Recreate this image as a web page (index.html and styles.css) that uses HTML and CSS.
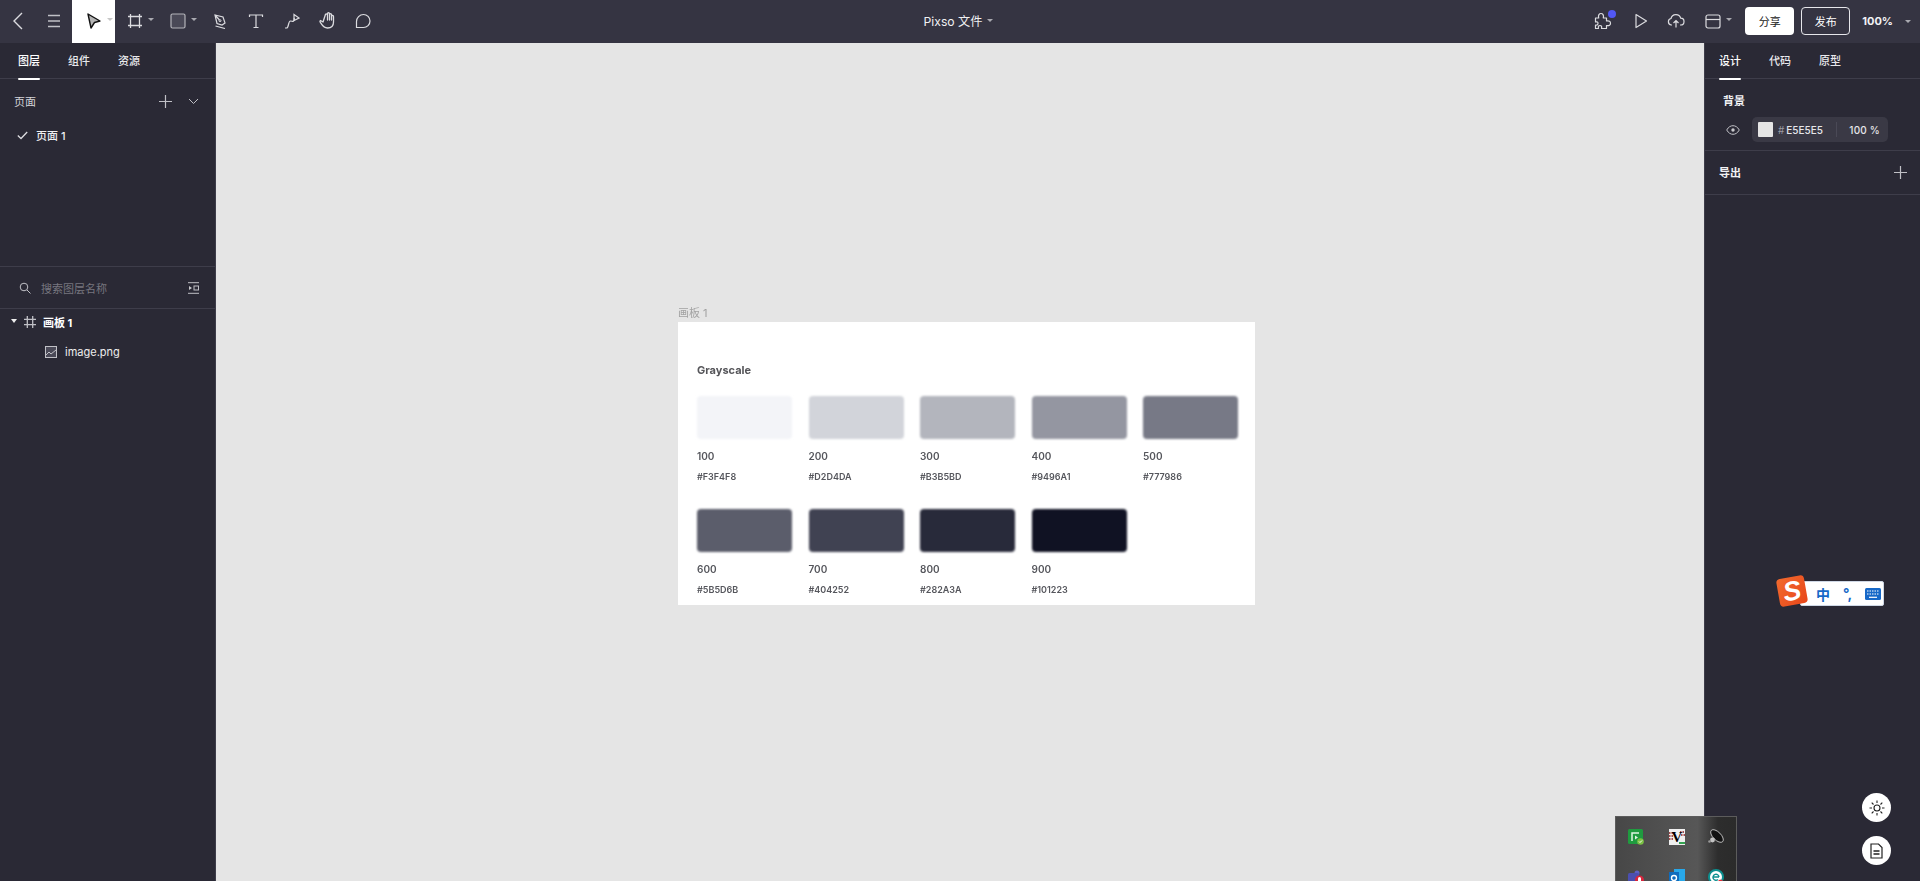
FILE: index.html
```html
<!DOCTYPE html>
<html lang="zh">
<head>
<meta charset="utf-8">
<title>Pixso</title>
<link rel="stylesheet" href="styles.css">
</head>
<body>
<div class="app">
  <header class="topbar">
    <div class="tools">
      <button class="tool w36"><svg width="20" height="20" viewBox="0 0 20 20" class="ic"><path d="M14 2 6 10l8 8" stroke-width="1.4"/></svg></button>
      <button class="tool w36"><svg width="16" height="16" viewBox="0 0 16 16" class="ic dim"><path d="M2 2.500h12M2 8h12M2 13.500h12" stroke-width="1.300"/></svg></button>
      <button class="tool w43 active">
        <svg width="16" height="18" viewBox="0 0 16 18"><path d="M2 2l12 7-5.500 1.500L5 16z" fill="#b5b5b5" stroke="#111" stroke-width="1.400" stroke-linejoin="round"/></svg>
        <span class="caret light"></span>
      </button>
      <button class="tool w43 f1">
        <svg width="16" height="16" viewBox="0 0 16 16" class="ic"><path d="M3.500 1v14M12.500 1v14M1 3.500h14M1 12.500h14" stroke-width="1.300"/></svg>
        <span class="caret"></span>
      </button>
      <button class="tool w43 f1">
        <svg width="16" height="16" viewBox="0 0 16 16" class="ic"><rect x="1" y="1" width="14" height="14" rx="1.500" fill="#4a4957" stroke="#b4b4ba" stroke-width="1.200"/></svg>
        <span class="caret"></span>
      </button>
      <button class="tool w37"><svg width="16" height="16" viewBox="0 0 16 16" class="ic"><path d="M3 2l8 2 2 6-3 2-5-1.500zM3 2l4.500 5M3.500 13l9.500 2.500" stroke-width="1.200"/><circle cx="8" cy="7.700" r="1" stroke-width="1"/></svg></button>
      <button class="tool w36"><svg width="16" height="16" viewBox="0 0 16 16" class="ic"><path d="M1.500 4V2h13v2M8 2v12.500M5.500 14.500h5" stroke-width="1.200"/></svg></button>
      <button class="tool w35"><svg width="16" height="16" viewBox="0 0 16 16" class="ic"><path d="M1 15h1.500C5 15 4 8 6.500 8c2 0 1.500 1 3 0s.5-3 .5-3" stroke-width="1.200"/><path d="M10 1.500 15 5l-5 2.500z" stroke-width="1.200"/></svg></button>
      <button class="tool w36"><svg width="17" height="17" viewBox="0 0 17 17" class="ic"><path d="M4 10 1.500 8.500C.5 9 1 10 1.800 11c1 1.500 2.500 5 6.700 5 4.500 0 6-2.500 6-6V4.500c0-1.500-2-1.500-2 0V8V2.800c0-1.500-2-1.500-2 0V8V1.800c0-1.500-2-1.500-2 0V8V3c0-1.500-2.200-1.500-2.200 0z" stroke-width="1.300" stroke-linejoin="round"/></svg></button>
      <button class="tool w36"><svg width="16" height="16" viewBox="0 0 16 16" class="ic"><path d="M8.500 1.500a6.500 6.500 0 0 1 0 13H1.500V8.500a7 7 0 0 1 7-7z" stroke-width="1.200"/></svg></button>
    </div>
    <div class="doc-title">Pixso 文件<span class="caret"></span></div>
    <div class="actions">
      <span class="act plugin">
        <svg width="18" height="18" viewBox="0 0 18 18" class="ic"><path d="M1.500 6h3.200c-.8-3 .6-4.500 2.300-4.500S10 3 9.300 6h3.200v3c2.700-.6 4 .6 4 2.200s-1.300 3-4 2.300v3H7.500c.6-2.200-.2-3-1.500-3s-2.100.8-1.500 3h-3v-3.500c1.800.3 2.500-.5 2.500-1.700S3.300 9.600 1.500 10z" stroke-width="1.200" stroke-linejoin="round"/></svg>
        <i class="dot"></i>
      </span>
      <span class="act"><svg width="14" height="16" viewBox="0 0 14 16" class="ic"><path d="M2 1.500 12.500 8 2 14.500z" stroke-width="1.200" stroke-linejoin="round"/></svg></span>
      <span class="act"><svg width="18" height="16" viewBox="0 0 18 16" class="ic"><path d="M5 12H4.300A3.300 3.300 0 0 1 4 5.500a5 5 0 0 1 9.700-.3A3.400 3.400 0 0 1 13.500 12H13M9 14.500V7.500M6.500 10 9 7.500l2.500 2.500" stroke-width="1.200"/></svg></span>
      <span class="act layout">
        <svg width="16" height="15" viewBox="0 0 16 15" class="ic"><rect x="1" y="1" width="14" height="13" rx="2" stroke-width="1.200"/><path d="M1 5.500h14" stroke-width="1.200"/></svg>
        <span class="caret"></span>
      </span>
      <button class="btn solid">分享</button>
      <button class="btn outline">发布</button>
      <span class="zoom">100%<span class="caret"></span></span>
    </div>
  </header>

  <div class="workspace">
    <aside class="panel left">
      <nav class="tabs">
        <span class="tab on">图层</span><span class="tab">组件</span><span class="tab">资源</span>
      </nav>
      <section class="pages">
        <div class="pages-head">
          <span class="muted-title">页面</span>
          <span class="pages-tools">
            <svg width="13" height="13" viewBox="0 0 13 13" class="ic dim"><path d="M6.500 0v13M0 6.500h13" stroke-width="1.200"/></svg>
            <svg width="11" height="7" viewBox="0 0 11 7" class="ic dim"><path d="M1 1l4.500 4.500L10 1" stroke-width="1"/></svg>
          </span>
        </div>
        <div class="page-row">
          <svg width="11" height="9" viewBox="0 0 11 9" class="ic"><path d="M.8 4.500l3.200 3L10.200 1" stroke-width="1.300"/></svg>
          <span>页面 1</span>
        </div>
      </section>
      <section class="search">
        <svg width="12" height="12" viewBox="0 0 12 12" class="ic dim"><circle cx="5" cy="5" r="3.800" stroke-width="1"/><path d="M8 8l3.500 3.500" stroke-width="1"/></svg>
        <span class="placeholder">搜索图层名称</span>
        <svg class="filter ic dim" width="12" height="12" viewBox="0 0 12 12"><path d="M0 .7h11M0 11.300h11" stroke-width="1"/><path d="M1 4l3 2-3 2z" fill="#c8c8cc" stroke="none"/><rect x="6" y="4" width="4.500" height="4" stroke-width="1"/></svg>
      </section>
      <div class="layer artboard-row">
        <span class="tri"></span>
        <svg width="12" height="12" viewBox="0 0 12 12" class="ic dim"><path d="M3.300 0v12M8.700 0v12M0 3.300h12M0 8.700h12" stroke-width="1.300"/></svg>
        <span class="layer-name strong">画板 1</span>
      </div>
      <div class="layer image-row">
        <svg width="12" height="12" viewBox="0 0 12 12" class="ic dim"><rect x=".5" y=".5" width="11" height="11" fill="#4a4957" stroke-width="1"/><path d="M1 9l3-3 2 2 5-4" stroke-width="1"/></svg>
        <span class="layer-name">image.png</span>
      </div>
    </aside>

    <main class="canvas">
      <div class="board">
        <div class="board-label">画板 1</div>
        <div class="board-body">
          <h2 class="gs-title">Grayscale</h2>
          <div class="gs-grid">
            <div class="gs"><div class="sw c100"></div><div class="num">100</div><div class="hex">#F3F4F8</div></div>
            <div class="gs"><div class="sw c200"></div><div class="num">200</div><div class="hex">#D2D4DA</div></div>
            <div class="gs"><div class="sw c300"></div><div class="num">300</div><div class="hex">#B3B5BD</div></div>
            <div class="gs"><div class="sw c400"></div><div class="num">400</div><div class="hex">#9496A1</div></div>
            <div class="gs"><div class="sw c500"></div><div class="num">500</div><div class="hex">#777986</div></div>
            <div class="gs"><div class="sw c600"></div><div class="num">600</div><div class="hex">#5B5D6B</div></div>
            <div class="gs"><div class="sw c700"></div><div class="num">700</div><div class="hex">#404252</div></div>
            <div class="gs"><div class="sw c800"></div><div class="num">800</div><div class="hex">#282A3A</div></div>
            <div class="gs"><div class="sw c900"></div><div class="num">900</div><div class="hex">#101223</div></div>
          </div>
        </div>
      </div>
    </main>

    <aside class="panel right">
      <nav class="tabs">
        <span class="tab on">设计</span><span class="tab">代码</span><span class="tab">原型</span>
      </nav>
      <section class="bg-sec">
        <div class="sec-title">背景</div>
        <div class="bg-row">
          <svg width="14" height="10" viewBox="0 0 14 10" class="ic dim"><path d="M.7 5C2.500 1.800 4.800.7 7 .7s4.500 1.100 6.300 4.300C11.500 8.200 9.200 9.300 7 9.300S2.500 8.200.7 5z" stroke-width="1"/><circle cx="7" cy="5" r="1.700" fill="#c8c8cc" stroke="none"/></svg>
          <div class="field">
            <span class="chip"></span>
            <span class="hash">#</span>
            <span class="fval">E5E5E5</span>
            <span class="fsep"></span>
            <span class="fpct">100 %</span>
          </div>
        </div>
      </section>
      <section class="export-sec">
        <span class="sec-title">导出</span>
        <svg width="13" height="13" viewBox="0 0 13 13" class="ic dim"><path d="M6.500 0v13M0 6.500h13" stroke-width="1.200"/></svg>
      </section>
    </aside>
  </div>
</div>

<div class="ime">
  <span class="ime-logo">S</span>
  <div class="ime-bar">
    <span class="ime-zh">中</span>
    <span class="ime-punc">°,</span>
    <svg width="16" height="12" viewBox="0 0 16 12"><rect width="16" height="12" rx="1.500" fill="#1668c8"/><path d="M2 3h12M2 6h12" stroke="#fff" stroke-width="1.200" stroke-dasharray="1.500 1"/><path d="M4 9.300h8" stroke="#fff" stroke-width="1.200"/></svg>
  </div>
</div>

<button class="fab fab-one"><svg width="16" height="16" viewBox="0 0 16 16" class="ic dark"><circle cx="8" cy="8" r="3" stroke-width="1.100"/><path d="M8 .5v2.500M8 13v2.500M.5 8H3M13 8h2.500M2.700 2.700l1.800 1.800M11.500 11.500l1.800 1.800M2.700 13.300l1.800-1.800M11.500 4.500l1.800-1.800" stroke-width="1.100"/></svg></button>
<button class="fab fab-two"><svg width="13" height="16" viewBox="0 0 13 16" class="ic dark"><path d="M1 1h7.500L12 4.500V15H1z" stroke-width="1.200"/><path d="M3.500 8h6M3.500 11h6" stroke-width="1.300"/></svg></button>

<div class="tray">
  <span class="ti"><svg width="16" height="16" viewBox="0 0 16 16"><rect width="15" height="15" rx="1.500" fill="#1f9b3f"/><path d="M4 12V4h7" stroke="#dff5e2" stroke-width="1.500" fill="none"/><path d="M7 6.500v4l3-2z" fill="#dff5e2"/><circle cx="12.500" cy="12.500" r="3.300" fill="#7ac143"/><path d="M11 12.500l1 1 2-2" stroke="#fff" fill="none"/></svg></span>
  <span class="ti"><svg width="16" height="16" viewBox="0 0 16 16"><rect width="16" height="16" fill="#f0f0f0"/><path d="M0 4h5M0 7h4M0 10h5M11 3h5M12 6h4" stroke="#8c1c1c" stroke-width="1.300" stroke-dasharray="1.500 1"/><text x="8" y="13" class="vim" text-anchor="middle">V</text><path d="M10 14h6" stroke="#1f9b3f" stroke-width="1.800"/></svg></span>
  <span class="ti speaker"><svg width="17" height="16" viewBox="0 0 17 16"><ellipse cx="10" cy="7" rx="8" ry="4" transform="rotate(45 10 7)" fill="#111" stroke="#d8d8d8" stroke-width=".8"/><circle cx="5.500" cy="11" r="2.400" fill="#c4c4c4"/><circle cx="2.500" cy="12.500" r="1.300" fill="#999"/></svg></span>
  <span class="ti"><svg width="16" height="16" viewBox="0 0 16 16"><circle cx="9" cy="4" r="2.500" fill="#5b5fc7"/><rect x="0" y="4" width="11" height="12" rx="1.500" fill="#4b4fb0"/><circle cx="11.500" cy="11" r="4.500" fill="#d7263d"/><rect x="10" y="8" width="3" height="6" rx="1.500" fill="#fff"/></svg></span>
  <span class="ti"><svg width="16" height="16" viewBox="0 0 16 16"><rect x="5" y="0" width="11" height="16" fill="#28a8ea"/><rect x="0" y="3" width="10" height="13" fill="#0f6cbd"/><circle cx="5" cy="9" r="2.500" fill="none" stroke="#fff" stroke-width="1.400"/></svg></span>
  <span class="ti speaker"><svg width="16" height="16" viewBox="0 0 16 16"><circle cx="8" cy="8" r="7" fill="#fff" stroke="#0c8f8f" stroke-width="2"/><path d="M5 8h6M11 8a3 3 0 1 0-1 2.500" fill="none" stroke="#0c8f8f" stroke-width="1.400"/><circle cx="12.500" cy="13" r="2.500" fill="#e0303a"/></svg></span>
</div>
</body>
</html>
```
FILE: styles.css
```css
* { box-sizing: border-box; }
html, body { margin: 0; height: 100%; overflow: hidden; }
body {
  position: relative;
  background: #2a2935;
  color: #fff;
  font-family: "Inter", "Noto Sans CJK SC", sans-serif;
  font-size: 11px;
}
button { font: inherit; border: 0; background: none; color: inherit; padding: 0; }
.ic { fill: none; stroke: #dcdce0; }
.ic.dim { stroke: #c0c0c6; }
.ic.dark { stroke: #222; }
.app { display: flex; flex-direction: column; height: 100vh; }

.topbar {
  flex: 0 0 43px;
  display: grid;
  grid-template-columns: 1fr auto 1fr;
  align-items: stretch;
  background: #353442;
}
.tools, .actions { display: flex; align-items: stretch; }
.tool { display: flex; align-items: center; justify-content: center; gap: 4px; position: relative; padding-bottom: 2px; }
.w35 { width: 35px; } .w36 { width: 36px; } .w37 { width: 37px; } .w43 { width: 43px; }
.tool.f1 { justify-content: flex-start; padding-left: 12px; }
.tool.active { background: #fff; justify-content: flex-start; padding-left: 14px; }
.caret {
  display: inline-block;
  width: 0; height: 0;
  border-left: 3px solid transparent;
  border-right: 3px solid transparent;
  border-top: 3px solid #a9a9b0;
}
.caret.light { border-top-color: #c8c8c8; margin-top: -3px; margin-left: 1px; }
.tool.f1 .caret { margin-top: -2px; margin-left: 1px; }

.doc-title {
  display: flex; align-items: center; gap: 5px;
  font-size: 12.200px; color: #f0f0f2;
  padding: 0 3px 2px 0;
}
.actions { justify-content: flex-end; align-items: center; padding: 0 9px 1px 0; }
.act { display: flex; align-items: center; position: relative; }
.plugin { margin-right: 22px; }
.act:nth-child(2) { margin-right: 19px; }
.act:nth-child(3) { margin-right: 20px; }
.layout { gap: 5px; margin-right: 13px; }
.layout .caret { margin-top: -3px; }
.dot {
  position: absolute; right: -4px; top: -2px;
  width: 8px; height: 8px; border-radius: 50%;
  background: #5258f5;
}
.btn {
  width: 49px; height: 28px; border-radius: 4px;
  font-size: 11px; text-align: center;
}
.btn.solid { background: #fff; color: #222; margin-right: 7px; }
.btn.outline { border: 1px solid #e6e6ea; color: #fff; margin-right: 12px; }
.zoom { display: flex; align-items: center; gap: 12px; font-weight: 700; font-size: 11px; color: #f2f2f4; }

.workspace { flex: 1; display: flex; min-height: 0; }
.panel { background: #2a2935; display: flex; flex-direction: column; flex: none; }
.panel.left { width: 216px; border-right: 1px solid #3e3d4a; }
.panel.right { width: 216px; border-left: 1px solid #3e3d4a; }
.canvas { flex: 1; background: #e5e5e5; position: relative; }

.tabs {
  height: 36px; display: flex; gap: 28px;
  padding: 10px 0 0 18px;
  border-bottom: 1px solid #3e3d4a;
  font-size: 11px;
  line-height: 16px;
  color: #e8e8ec;
}
.right .tabs { padding-left: 14px; }
.tab { position: relative; height: 26px; font-weight: 500; }
.tab.on { color: #fff; }
.tab.on::after {
  content: ""; position: absolute; left: 0; right: 0; bottom: -1px;
  height: 2px; border-radius: 1px; background: #fff;
}

.pages { height: 188px; border-bottom: 1px solid #3e3d4a; padding: 0 0 0 14px; }
.pages-head { display: flex; justify-content: space-between; align-items: center; height: 44px; padding-right: 16px; }
.muted-title { color: #d4d4d8; }
.pages-tools { display: flex; align-items: center; gap: 16px; }
.page-row { display: flex; align-items: center; gap: 8px; margin: -2px 0 0 3px; height: 28px; color: #f0f0f2; font-weight: 500; }

.search {
  height: 42px; display: flex; align-items: center;
  padding: 0 15px 0 19px;
  border-bottom: 1px solid #3e3d4a;
}
.placeholder { margin-left: 10px; color: #77767f; flex: 1; }
.layer { display: flex; align-items: center; color: #eee; }
.artboard-row { height: 30px; padding-left: 11px; margin-top: -2px; }
.image-row { height: 29px; padding-left: 45px; }
.tri {
  width: 0; height: 0; margin-right: 7px; margin-top: -3px;
  border-left: 3.500px solid transparent; border-right: 3.500px solid transparent;
  border-top: 4px solid #eee;
}
.artboard-row .layer-name { margin-left: 7px; }
.image-row .layer-name { margin-left: 8px; }
.strong { font-weight: 700; color: #fff; }

.board { position: absolute; left: 462px; top: 279px; width: 577px; }
.board-label {
  position: absolute; left: 0; top: -17px;
  font-size: 11px; line-height: 16px; color: #a2a2a2;
  filter: blur(.4px);
}
.board-body {
  height: 283px; background: #fff;
  padding: 40px 17px 0 19px;
  color: #4d4e55;
}
.gs-title {
  margin: 0; font-size: 11px; line-height: 16px; font-weight: 700; color: #56565a;
  filter: blur(.55px);
}
.gs-grid {
  display: grid;
  grid-template-columns: repeat(5, 95px);
  column-gap: 16.500px;
  grid-auto-rows: 113px;
  margin-top: 18px;
}
.sw { height: 43px; border-radius: 4px; filter: blur(.9px); }
.num, .hex { line-height: 12px; font-weight: 600; filter: blur(.7px); color: #55565c; }
.num { margin-top: 11px; font-size: 10px; }
.hex { margin-top: 9px; font-size: 9px; }
.c100 { background: #f3f4f8; } .c200 { background: #d2d4da; } .c300 { background: #b3b5bd; }
.c400 { background: #9496a1; } .c500 { background: #777986; } .c600 { background: #5b5d6b; }
.c700 { background: #404252; } .c800 { background: #282a3a; } .c900 { background: #101223; }

.bg-sec { height: 72px; border-bottom: 1px solid #3e3d4a; padding: 14px 0 0 18px; }
.sec-title { font-weight: 700; color: #f2f2f4; font-size: 11px; line-height: 16px; }
.bg-row { display: flex; align-items: center; gap: 12px; margin: 8px 0 0 3px; }
.field {
  width: 136px; height: 25px; background: #3a3945; border-radius: 5px;
  display: flex; align-items: center; padding-left: 6px; color: #e6e6ea; font-size: 10px;
}
.chip { width: 15px; height: 15px; background: #e5e5e5; border-radius: 1px; }
.hash { margin-left: 5px; color: #9c9ca4; }
.fval { margin-left: 2px; width: 50px; font-weight: 500; }
.fsep { width: 1px; height: 15px; background: #4a4956; }
.fpct { margin-left: 12px; font-weight: 500; letter-spacing: .2px; }
.export-sec {
  height: 44px; display: flex; justify-content: space-between; align-items: center;
  padding: 0 13px 0 14px; border-bottom: 1px solid #3e3d4a;
}

.ime { position: absolute; left: 1778px; top: 576px; display: flex; align-items: center; }
.ime-logo {
  width: 28px; height: 28px; border-radius: 4px;
  background: linear-gradient(135deg, #f26a2e, #e8471a);
  transform: rotate(-10deg);
  color: #fff; font: italic 700 27px/28px "Liberation Sans", sans-serif; text-align: center;
  position: relative; z-index: 1;
}
.ime-bar {
  width: 84px; height: 25px; margin: 5px 0 0 -6px;
  background: #fff; border-radius: 2px; border: 1px solid #cfd8e6;
  display: flex; align-items: center; padding-left: 15px; color: #1668c8;
}
.ime-zh { font-size: 14px; font-weight: 700; width: 27px; }
.ime-punc { font-size: 14px; font-weight: 700; width: 21.500px; }

.fab {
  position: absolute; left: 1862px; width: 29px; height: 29px; border-radius: 50%;
  background: #fff; display: flex; align-items: center; justify-content: center;
}
.fab-one { top: 793px; }
.fab-two { top: 836px; }

.tray {
  position: absolute; left: 1615px; top: 816px; width: 122px; height: 65px;
  overflow: hidden;
  background: linear-gradient(90deg, #474747 0%, #575757 68%, #2d2d2d 85%, #2b2b2b 100%);
  border: 1px solid #5c5c5c;
  border-bottom: 0;
  display: grid; grid-template-columns: repeat(3, 40.500px); grid-auto-rows: 40px;
  align-items: center; justify-items: center;
}
.ti { display: flex; }
.speaker { margin-right: 3px; }
.vim { font: 700 15px "Liberation Serif", serif; fill: #000; }
```
